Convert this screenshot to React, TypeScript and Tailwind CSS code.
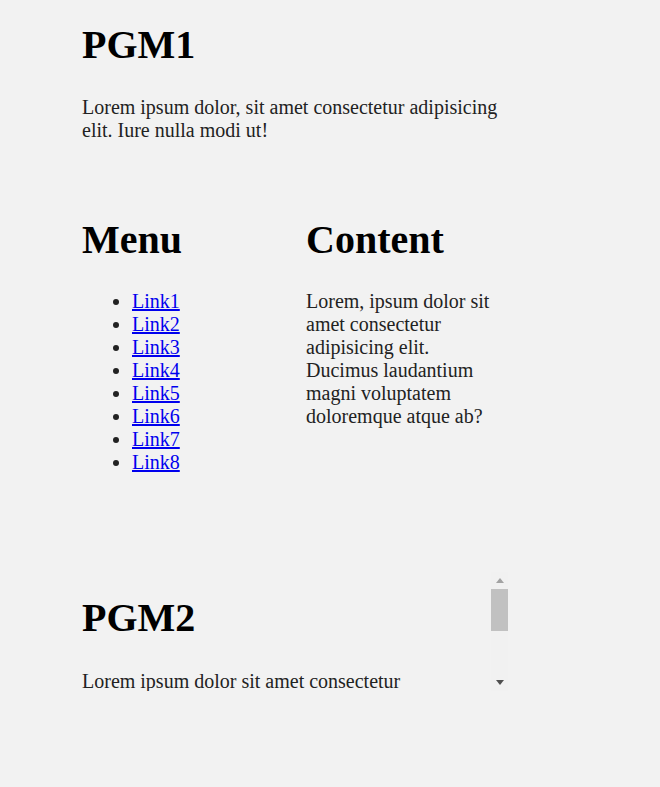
export default function App() {
  const links = ["Link1", "Link2", "Link3", "Link4", "Link5", "Link6", "Link7", "Link8"];
  return (
    <div className="min-h-[787px] bg-[#f2f2f2] text-[#222] text-[20px] leading-[23px]" style={{ fontFamily: '"Liberation Serif", "Times New Roman", serif' }}>
      <div className="ml-[82px] w-[429px] pt-[22px]">
        <h1 className="text-[40px] leading-[46px] font-bold text-black">PGM1</h1>
        <p className="mt-[28px]">
          Lorem ipsum dolor, sit amet consectetur adipisicing elit. Iure nulla modi ut!
        </p>
        <div className="mt-[75px] grid grid-cols-[224px_1fr]">
          <div>
            <h1 className="text-[40px] leading-[46px] font-bold text-black">Menu</h1>
            <ul className="mt-[27px] list-disc pl-[50px]">
              {links.map((l) => (
                <li key={l}>
                  <a href="#" className="text-[#0000ee] underline">{l}</a>
                </li>
              ))}
            </ul>
          </div>
          <div>
            <h1 className="text-[40px] leading-[46px] font-bold text-black">Content</h1>
            <p className="mt-[27px] w-[200px]">
              Lorem, ipsum dolor sit amet consectetur adipisicing elit. Ducimus laudantium magni voluptatem doloremque atque ab?
            </p>
          </div>
        </div>
        <div className="mt-[98px] flex h-[119px] w-[426px]">
          <div className="flex-1 overflow-hidden">
            <h1 className="mt-[23px] text-[40px] leading-[46px] font-bold text-black">PGM2</h1>
            <p className="mt-[29px]">
              Lorem ipsum dolor sit amet consectetur adipisicing elit. Quibusdam, voluptatum. Lorem ipsum dolor sit amet consectetur adipisicing elit. Ipsa, eius.
            </p>
          </div>
          <div className="flex w-[17px] flex-col bg-[#f1f1f1]">
            <div className="flex h-[17px] items-center justify-center">
              <div className="h-0 w-0 border-x-[4px] border-b-[5px] border-x-transparent border-b-[#a3a3a3]" />
            </div>
            <div className="h-[42px] bg-[#c1c1c1]" />
            <div className="flex-1" />
            <div className="flex h-[17px] items-center justify-center">
              <div className="h-0 w-0 border-x-[4px] border-t-[5px] border-x-transparent border-t-[#505050]" />
            </div>
          </div>
        </div>
      </div>
    </div>
  );
}
